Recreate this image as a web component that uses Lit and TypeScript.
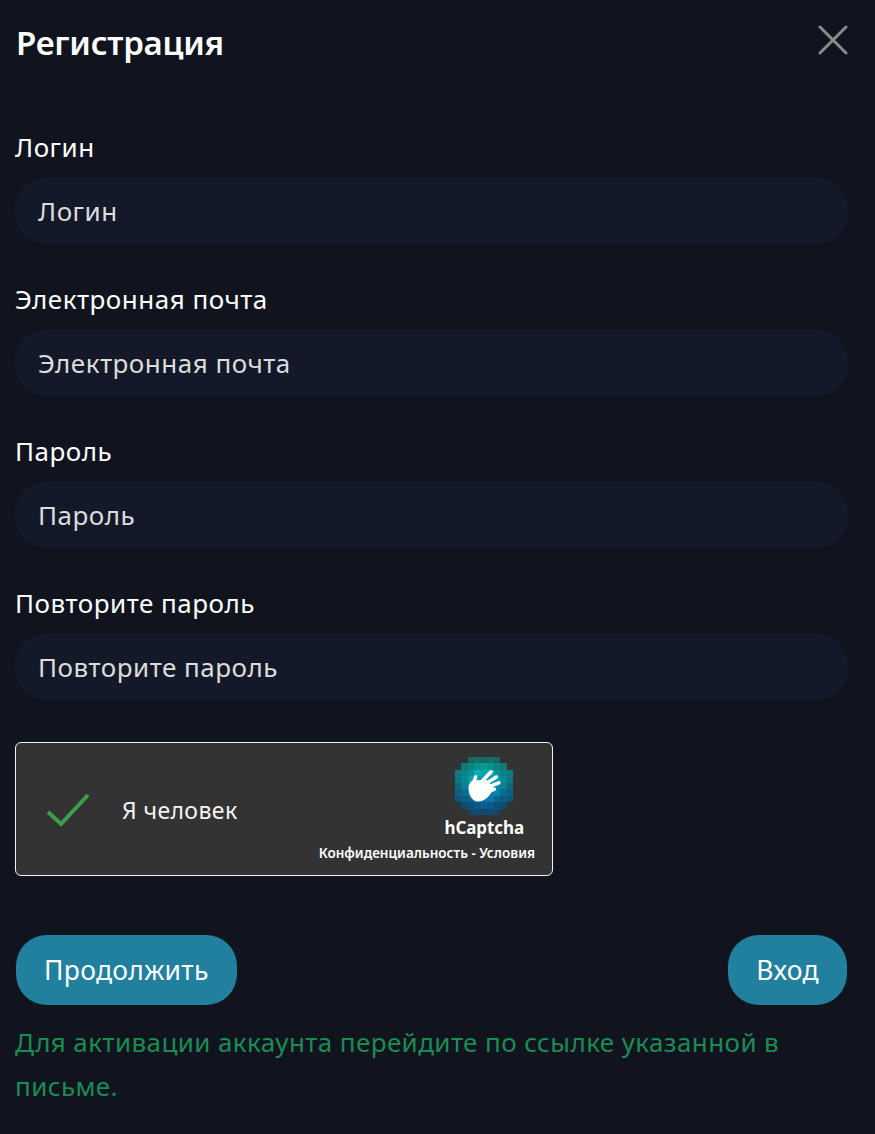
import { LitElement, html, css, svg } from "lit";
import { customElement } from "lit/decorators.js";

const ROWS: [number, number][] = [[2,6],[1,7],[0,8],[0,8],[0,8],[0,8],[0,8],[1,7],[2,6]];
const STOPS = [[20,150,140],[10,175,170],[5,175,185],[8,160,175],[8,145,170],[8,130,175],[8,120,175],[10,105,165],[15,95,150]];

function cellColor(r: number, c: number) {
  const s = STOPS[r];
  const d = Math.hypot(c - 4, r - 4);
  const k = d > 3.6 ? 0.68 : d > 2.8 ? 0.85 : 1;
  const alt = (r + c) % 2 ? 1 : 0.95;
  return `rgb(${Math.round(s[0] * k + 20 * (1 - k))},${Math.round(s[1] * k * alt + 30 * (1 - k))},${Math.round(s[2] * k * alt + 30 * (1 - k))})`;
}

@customElement("app-root")
export class AppRoot extends LitElement {
  static styles = css`
    :host { display: block; background: #11141e; min-height: 1134px; color: #fff; font-family: "Noto Sans", "Open Sans", sans-serif; box-sizing: border-box; padding: 0 27px 0 15px; overflow: hidden; }
    .head { display: flex; justify-content: space-between; align-items: center; height: 86px; }
    h1 { margin: 0 0 2px 1px; font-size: 33px; font-weight: 600; letter-spacing: -0.25px; }
    .close { display: block; width: 30px; height: 30px; margin-bottom: 6px; }
    .field { display: flex; flex-direction: column; }
    .field + .field { margin-top: 38px; }
    .fields { padding-top: 44px; }
    label { font-size: 26px; line-height: 34px; height: 34px; letter-spacing: 0.5px; }
    .input { margin-top: 14px; height: 66px; border-radius: 30px; background: #141929; color: #dcdcdc; font-size: 26px; line-height: 66px; padding-left: 23px; letter-spacing: 0.5px; }
    .captcha { margin-top: 42px; box-sizing: border-box; width: 538px; height: 134px; border: 1px solid #f2f2f2; border-radius: 6px; background: #333333; display: flex; align-items: center; }
    .check { display: block; margin-left: 30px; width: 44px; height: 34px; margin-top: 2px; flex: none; }
    .human { margin-left: 32px; font-size: 23px; letter-spacing: 0.4px; color: #f4f4f4; margin-top: 2px; }
    .brand { margin-left: auto; margin-right: 17px; margin-top: 1px; width: 220px; display: flex; flex-direction: column; align-items: flex-end; }
    .logo { display: block; width: 58px; height: 58px; margin-right: 22px; }
    .word { font-size: 17px; font-weight: 700; line-height: 22px; margin-top: 2px; margin-right: 11px; letter-spacing: -0.1px; }
    .links { font-size: 13.5px; font-weight: 600; line-height: 18px; margin-top: 5px; white-space: nowrap; }
    .actions { display: flex; justify-content: space-between; margin-top: 58px; }
    .btn { height: 72px; box-sizing: border-box; border-radius: 32px; background: #22809f; color: #fff; font-size: 26.5px; line-height: 70px; padding: 0 28px; letter-spacing: 0.3px; border: 1px solid #10151d; }
    .note { margin: 14px 0 0; font-size: 26px; line-height: 44px; color: #1a8c52; letter-spacing: 0.4px; }
  `;

  renderField(t: string) {
    return html`<div class="field"><label>${t}</label><div class="input">${t}</div></div>`;
  }

  render() {
    return html`
      <div class="head">
        <h1>Регистрация</h1>
        <svg class="close" viewBox="0 0 30 30" fill="none" stroke="#8a8a8a" stroke-width="3" stroke-linecap="round"><path d="M2 2 L28 28 M28 2 L2 28"/></svg>
      </div>
      <div class="fields">
        ${["Логин", "Электронная почта", "Пароль", "Повторите пароль"].map((t) => this.renderField(t))}
      </div>
      <div class="captcha">
        <svg class="check" viewBox="0 0 44 34" fill="none" stroke="#3f9f49" stroke-width="4"><path d="M2 19 L15 31 L42 2"/></svg>
        <span class="human">Я человек</span>
        <div class="brand">
          <svg class="logo" viewBox="0 0 9 9">
            <g shape-rendering="crispEdges">
              ${ROWS.map(([a, b], r) => Array.from({ length: b - a + 1 }, (_, i) => svg`<rect x=${a + i} y=${r} width="1" height="1" fill=${cellColor(r, a + i)}/>`))}
            </g>
            <path fill="#fff" d="M2.1 4.7 C2.2 4 2.6 3.6 3 3.6 L5 3.6 L6 4.8 C5.5 6 4.6 6.9 3.6 6.9 C2.7 6.9 2.1 6 2.1 4.7 Z"/>
            <g fill="none" stroke="#fff" stroke-width="0.55" stroke-linecap="round">
              <path d="M2.7 4.5 L3.2 3.1 M3.8 4.2 L5.6 2.3 M4.4 4.4 L6.4 3.1 M4.8 4.8 L6.8 4 M5 5.4 L6.1 5"/>
            </g>
          </svg>
          <div class="word">hCaptcha</div>
          <div class="links">Конфиденциальность - Условия</div>
        </div>
      </div>
      <div class="actions">
        <div class="btn">Продолжить</div>
        <div class="btn">Вход</div>
      </div>
      <p class="note">Для активации аккаунта перейдите по ссылке указанной в письме.</p>
    `;
  }
}
